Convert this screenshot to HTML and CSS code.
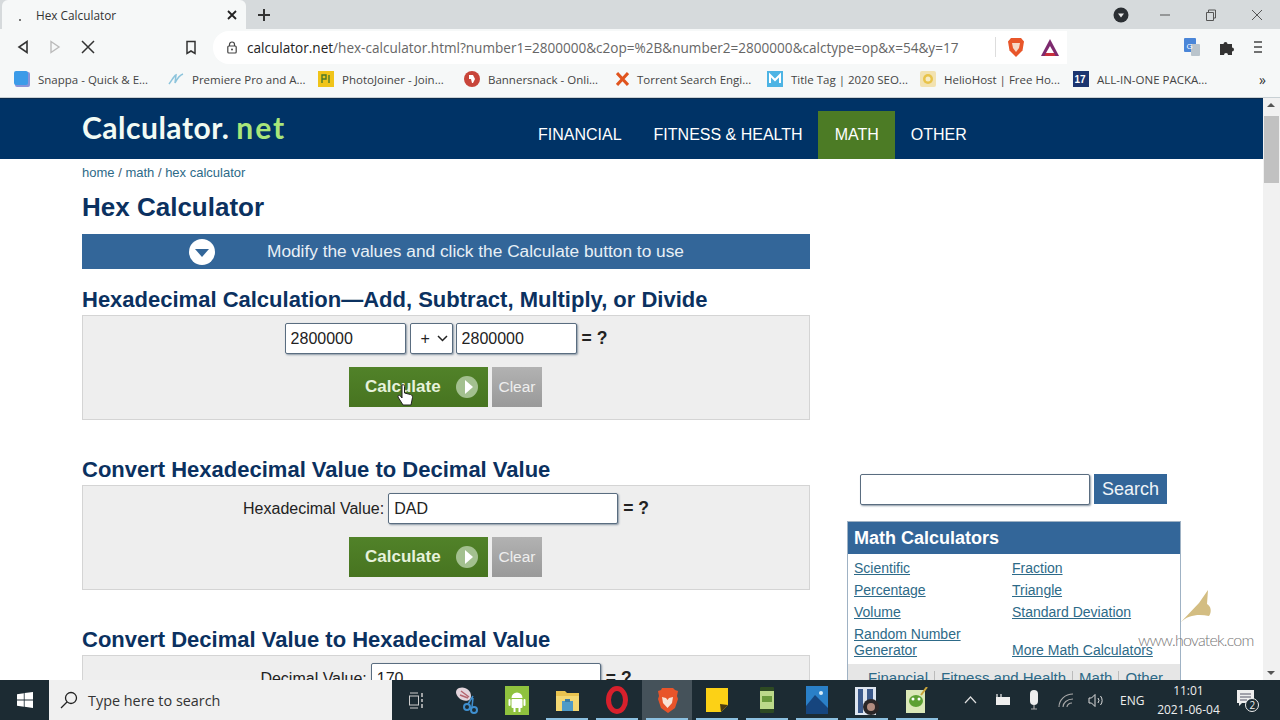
FILE: index.html
```html
<!DOCTYPE html>
<html lang="en">
<head>
    <meta charset="UTF-8">
    <title>Hex Calculator</title>
    <link rel="stylesheet" href="styles.css">
</head>
<body>

    <!-- Tab strip -->
    <div class="tabstrip">
        <div class="tab">
            <span class="tab-dot"></span>
            <span class="tab-title">Hex Calculator</span>
            <svg class="tab-x" width="12" height="12" viewBox="0 0 12 12"><path d="M2 2l8 8M10 2l-8 8" stroke="#222" stroke-width="1.8"/></svg>
        </div>
        <svg class="new-tab" width="14" height="14" viewBox="0 0 14 14"><path d="M7 1v12M1 7h12" stroke="#333" stroke-width="2"/></svg>
        <div class="window-controls">
            <svg class="profile" width="16" height="16" viewBox="0 0 16 16"><circle cx="8" cy="8" r="7.5" fill="#2b2f33"/><path d="M5 6.5h6L8 10.5z" fill="#e8e8e8"/></svg>
            <svg class="win-btn" width="12" height="12" viewBox="0 0 12 12"><path d="M1 6h10" stroke="#555"/></svg>
            <svg class="win-btn" width="12" height="12" viewBox="0 0 12 12"><path d="M1.500 3.500h7v8h-7zM3.500 3.500v-2.500h7v8h-2" fill="none" stroke="#555"/></svg>
            <svg class="win-btn" width="12" height="12" viewBox="0 0 12 12"><path d="M1 1l10 10M11 1L1 11" stroke="#555"/></svg>
        </div>
    </div>

    <!-- Toolbar -->
    <div class="toolbar">
        <svg class="nav-btn" width="12" height="14" viewBox="0 0 12 14"><path d="M10 1.500v11L2 7z" fill="none" stroke="#333" stroke-width="1.600"/></svg>
        <svg class="nav-btn" width="12" height="14" viewBox="0 0 12 14"><path d="M2 1.500v11L10 7z" fill="none" stroke="#bbb" stroke-width="1.400"/></svg>
        <svg class="nav-btn" width="14" height="14" viewBox="0 0 14 14"><path d="M1 1l12 12M13 1L1 13" stroke="#333" stroke-width="1.500"/></svg>
        <svg class="bookmark-btn" width="12" height="15" viewBox="0 0 12 15"><path d="M2 1.500h8v12L6 11l-4 2.500z" fill="none" stroke="#333" stroke-width="1.500"/></svg>
        <div class="omnibox">
            <svg class="lock" width="10" height="13" viewBox="0 0 10 13"><path d="M2.500 5V3.500a2.500 2.500 0 015 0V5" fill="none" stroke="#444" stroke-width="1.200"/><rect x=".8" y="5" width="8.400" height="7" rx="1" fill="none" stroke="#444" stroke-width="1.200"/><circle cx="5" cy="8.500" r="1" fill="#444"/></svg>
            <span class="url"><span class="url-host">calculator.net</span>/hex-calculator.html?number1=2800000&amp;c2op=%2B&amp;number2=2800000&amp;calctype=op&amp;x=54&amp;y=17</span>
            <span class="omni-sep"></span>
            <svg class="omni-icon" width="18" height="21" viewBox="0 0 18 21"><path d="M4 1h10l3 3.500-1.500 9L9 20l-6.500-6.500L1 4.500z" fill="#e8562a"/><path d="M5 6h8l-1 5-3 4-3-4z" fill="#f6d9c8"/></svg>
            <svg class="omni-icon" width="18" height="17" viewBox="0 0 18 17"><path d="M9 0L18 17H0z" fill="#7d2a6e"/><path d="M9 7l4 7H5z" fill="#fff"/><path d="M5 14h8l1.500 3h-11z" fill="#c8303c"/></svg>
        </div>
        <div class="ext-icons">
            <svg width="16" height="18" viewBox="0 0 16 18"><rect width="12" height="14" rx="1" fill="#4a86d8"/><rect x="7" y="6" width="9" height="12" rx="1" fill="#b9c4cc"/><text x="2.500" y="11" font-size="8" fill="#fff" font-family="Liberation Sans">G</text></svg>
            <svg width="15" height="15" viewBox="0 0 15 15"><path d="M1 4h3.500a2 2 0 114 0H13v3.500a2 2 0 110 4V15H9a2 2 0 10-4 0H1z" fill="#333"/></svg>
            <svg width="10" height="14" viewBox="0 0 10 14"><path d="M1 2h8M1 7h8M1 12h8" stroke="#444" stroke-width="1.500"/></svg>
        </div>
    </div>

    <!-- Bookmarks bar -->
    <div class="bookmarks">
        <div class="bm bm-1"><svg width="16" height="16" viewBox="0 0 16 16"><rect x="1" y="1" width="15" height="15" rx="2" fill="#8a94d8"/><rect width="14" height="14" rx="2" fill="#3b9be8"/></svg>Snappa - Quick &amp; E...</div>
        <div class="bm bm-2"><svg width="16" height="16" viewBox="0 0 16 16"><path d="M1 13C4 9 6 5 8 4L7 12C9 8 12 4 15 3" fill="none" stroke="#8cc4dc" stroke-width="1.500"/></svg>Premiere Pro and A...</div>
        <div class="bm bm-3"><svg width="16" height="16" viewBox="0 0 16 16"><rect width="16" height="16" fill="#f0c419"/><path d="M4 4h4v4H4zM4 8v4M11 4v8" fill="none" stroke="#4a7a2a" stroke-width="1.400"/></svg>PhotoJoiner - Join...</div>
        <div class="bm bm-4"><svg width="16" height="16" viewBox="0 0 16 16"><circle cx="8" cy="8" r="8" fill="#c8453a"/><path d="M5 4h4l2 4-2 4H8L7 8H5z" fill="#fff"/></svg>Bannersnack - Onli...</div>
        <div class="bm bm-5"><svg width="13" height="14" viewBox="0 0 13 14"><path d="M1 1l11 12M12 1L1 13" stroke="#e0541e" stroke-width="3"/></svg>Torrent Search Engi...</div>
        <div class="bm bm-6"><svg width="16" height="16" viewBox="0 0 16 16"><rect width="16" height="16" fill="#4db4e4"/><path d="M3 12V4l5 5 5-5v8" fill="none" stroke="#fff" stroke-width="2"/></svg>Title Tag | 2020 SEO...</div>
        <div class="bm bm-7"><svg width="16" height="16" viewBox="0 0 16 16"><rect width="16" height="16" rx="2" fill="#f2e2b0"/><circle cx="8" cy="8" r="5" fill="#e8c34a"/><circle cx="8" cy="8" r="2.500" fill="#f6ecc8"/></svg>HelioHost | Free Ho...</div>
        <div class="bm bm-8"><svg width="16" height="16" viewBox="0 0 16 16"><rect width="16" height="16" fill="#1c3570"/><text x="1.500" y="12" font-size="10" font-weight="700" fill="#fff" font-family="Liberation Sans">17</text></svg>ALL-IN-ONE PACKA...</div>
        <span class="bm-more">»</span>
    </div>

    <!-- Page in the browser viewport -->
    <div class="viewport">
        <div class="page">
            <div class="site-header">
                <div class="logo">Calculator.<span class="logo-net">net</span></div>
                <nav class="site-nav">
                    <a>FINANCIAL</a>
                    <a>FITNESS &amp; HEALTH</a>
                    <a class="active">MATH</a>
                    <a>OTHER</a>
                </nav>
            </div>

            <div class="columns">
                <div class="main">
                    <div class="breadcrumb"><a>home</a> / <a>math</a> / <a>hex calculator</a></div>
                    <h1>Hex Calculator</h1>
                    <div class="modify-bar">
                        <svg width="26" height="26" viewBox="0 0 26 26"><circle cx="13" cy="13" r="13" fill="#fff"/><path d="M6 10h14l-7 8z" fill="#336699"/></svg>
                        <span>Modify the values and click the Calculate button to use</span>
                    </div>

                    <h2>Hexadecimal Calculation—Add, Subtract, Multiply, or Divide</h2>
                    <div class="panel">
                        <div class="form-row">
                            <input class="field field-num" type="text" value="2800000">
                            <div class="field op-select">+<svg width="11" height="7" viewBox="0 0 11 7"><path d="M1 1l4.500 4.500L10 1" fill="none" stroke="#222" stroke-width="1.500"/></svg></div>
                            <input class="field field-num field-second" type="text" value="2800000">
                            <b class="equals">= ?</b>
                        </div>
                        <div class="btn-row">
                            <div class="btn-calc">Calculate<svg width="24" height="24" viewBox="0 0 24 24"><circle cx="12" cy="12" r="11" fill="#a3c08f"/><path d="M10 5l8 7-8 7z" fill="#fff"/></svg></div>
                            <div class="btn-clear">Clear</div>
                        </div>
                    </div>

                    <h2>Convert Hexadecimal Value to Decimal Value</h2>
                    <div class="panel">
                        <div class="form-row">
                            <span class="label">Hexadecimal Value:</span>
                            <input class="field field-wide" type="text" value="DAD">
                            <b class="equals">= ?</b>
                        </div>
                        <div class="btn-row">
                            <div class="btn-calc">Calculate<svg width="24" height="24" viewBox="0 0 24 24"><circle cx="12" cy="12" r="11" fill="#a3c08f"/><path d="M10 5l8 7-8 7z" fill="#fff"/></svg></div>
                            <div class="btn-clear">Clear</div>
                        </div>
                    </div>

                    <h2>Convert Decimal Value to Hexadecimal Value</h2>
                    <div class="panel">
                        <div class="form-row">
                            <span class="label">Decimal Value:</span>
                            <input class="field field-wide" type="text" value="170">
                            <b class="equals">= ?</b>
                        </div>
                    </div>
                </div>

                <div class="sidebar">
                    <div class="search-row">
                        <input class="search-input" type="text">
                        <div class="search-btn">Search</div>
                    </div>
                    <div class="side-box">
                        <div class="side-title">Math Calculators</div>
                        <div class="side-links">
                            <a>Scientific</a><a>Fraction</a>
                            <a>Percentage</a><a>Triangle</a>
                            <a>Volume</a><a>Standard Deviation</a>
                            <a class="random-link">Random Number Generator</a><a>More Math Calculators</a>
                        </div>
                        <div class="side-footer"><a>Financial</a><i></i><a>Fitness and Health</a><i></i><a>Math</a><i></i><a>Other</a></div>
                    </div>
                </div>
            </div>
        </div>

        <div class="scrollbar">
            <span class="arrow-up"></span>
            <span class="thumb"></span>
            <span class="arrow-down"></span>
        </div>

        <!-- Mouse pointer and video watermark on top of the page -->
        <svg class="cursor" width="17" height="24" viewBox="0 0 17 24"><path d="M5 2c1.200-1 2.500 0 2.500 1.500V10l6 1.500c1.500.5 2 1.500 2 3L14 22H6L1 14c-.5-1.500 1-2.500 2.500-1L5 15z" fill="#fff" stroke="#222"/></svg>
        <div class="watermark">
            <svg width="32" height="33" viewBox="0 0 32 33"><path d="M28 0L19 13 0 33c8-8 18-9 29-7 3-4 2-10-2-12z" fill="#d3bd82"/></svg>
            <span>www.hovatek.com</span>
        </div>
    </div>

    <!-- Windows taskbar -->
    <div class="taskbar">
        <div class="start"><svg width="16" height="16" viewBox="0 0 16 16"><path d="M0 2.200l6.800-1v6.300H0zM7.600 1L16 0v7.500H7.600zM0 8.400h6.800v6.400l-6.800-1zM7.600 8.400H16V16l-8.400-1.200z" fill="#fff"/></svg></div>
        <div class="task-search">
            <svg width="18" height="18" viewBox="0 0 18 18"><circle cx="11" cy="7" r="5.500" fill="none" stroke="#222" stroke-width="1.300"/><path d="M7 11l-6 6" stroke="#222" stroke-width="1.300"/></svg>
            <span>Type here to search</span>
        </div>
        <div class="task-view"><svg width="17" height="17" viewBox="0 0 17 17"><path d="M3 1h8M3 16h8" stroke="#ccc"/><rect x="2.500" y="4" width="9" height="9" fill="none" stroke="#ccc"/><path d="M15 1v4M15 7v3M15 12v4" stroke="#ccc" stroke-width="1.500"/></svg></div>
        <div class="task-apps">
            <div class="app"><svg width="24" height="28" viewBox="0 0 24 28"><path d="M4 2c6-2 12 2 12 8S8 16 4 12 0 4 4 2z" fill="#e3d4dc"/><path d="M6 5l8 6M5 9l8 3" stroke="#b5646e" stroke-width="1.500"/><circle cx="12" cy="21" r="3" fill="none" stroke="#3f8fd0" stroke-width="2"/><circle cx="19" cy="24" r="3" fill="none" stroke="#3f8fd0" stroke-width="2"/><path d="M13 18l5-8M17 21l1-9" stroke="#3f8fd0" stroke-width="1.500"/></svg></div>
            <div class="app"><svg width="24" height="29" viewBox="0 0 24 29"><rect width="24" height="29" fill="#8fc23e"/><path d="M6.500 12a5.500 5.500 0 0111 0z" fill="#fff"/><rect x="6.500" y="13" width="11" height="9" rx="1" fill="#fff"/><rect x="3.500" y="13" width="2" height="7" rx="1" fill="#fff"/><rect x="18.500" y="13" width="2" height="7" rx="1" fill="#fff"/><rect x="8.500" y="22" width="2" height="4" fill="#fff"/><rect x="13.500" y="22" width="2" height="4" fill="#fff"/></svg></div>
            <div class="app running"><svg width="23" height="22" viewBox="0 0 23 22"><path d="M0 2h9l2 2h12v18H0z" fill="#e9c350"/><rect y="7" width="23" height="15" fill="#f4d873"/><rect x="6" y="12" width="11" height="10" fill="#4f9bc8"/><rect x="9" y="10" width="5" height="3" fill="#3a7da8"/></svg></div>
            <div class="app running"><svg width="22" height="28" viewBox="0 0 22 28"><ellipse cx="11" cy="14" rx="8.500" ry="11.500" fill="none" stroke="#d8202c" stroke-width="5"/></svg></div>
            <div class="app running active"><svg width="23" height="27" viewBox="0 0 23 27"><path d="M6 1h11l2 2 3 1-1 5 1 3-3 9-7 5-7-5-3-9 1-3-1-5 3-1z" fill="#e8542a"/><path d="M6 10l4 1 1.500 2 1.500-2 4-1-1 6-4.500 5-4.500-5z" fill="#f8e3d6"/></svg></div>
            <div class="app running"><svg width="22" height="24" viewBox="0 0 22 24"><path d="M0 0h22v17l-7 7H0z" fill="#fcd116"/><path d="M15 24l-1-8 8 1z" fill="#4a3a12"/></svg></div>
            <div class="app running"><svg width="14" height="26" viewBox="0 0 14 26"><rect width="14" height="26" rx="1" fill="#2e4a22"/><rect y="4" width="14" height="18" fill="#bcd98a"/><rect x="2" y="9" width="10" height="6" fill="#6b9b3c"/></svg></div>
            <div class="app running"><svg width="22" height="28" viewBox="0 0 22 28"><rect width="22" height="28" fill="#2a80c8"/><path d="M0 28V20l9-11 13 13v6z" fill="#16457e"/><circle cx="15" cy="7" r="2" fill="#d8ecf8"/></svg></div>
            <div class="app running"><svg width="24" height="30" viewBox="0 0 24 30"><rect y="2" width="21" height="28" fill="#dfe6f0"/><path d="M3 4h5v24H3zM12 4h6v12h-6z" fill="#3c5a8c"/><circle cx="16" cy="22" r="8" fill="#2a2628"/><circle cx="16" cy="22" r="4" fill="#b28c80"/></svg></div>
            <div class="app running"><svg width="22" height="26" viewBox="0 0 22 26"><rect y="3" width="19" height="23" fill="#dbe8b8"/><ellipse cx="10" cy="14" rx="7" ry="6" fill="#5ca032"/><circle cx="7" cy="12" r="1.500" fill="#fff"/><circle cx="13" cy="12" r="1.500" fill="#fff"/><path d="M15 8l6-8" stroke="#c8a43c" stroke-width="2"/></svg></div>
        </div>
        <div class="tray">
            <svg class="tray-chevron" width="13" height="8" viewBox="0 0 13 8"><path d="M1 7l5.500-6L12 7" fill="none" stroke="#ddd" stroke-width="1.200"/></svg>
            <svg class="tray-battery" width="17" height="12" viewBox="0 0 17 12"><rect x="2" y="3" width="14" height="8" fill="#eee"/><path d="M3 0v3M7 0v3" stroke="#eee" stroke-width="1.200"/></svg>
            <svg class="tray-mic" width="10" height="20" viewBox="0 0 10 20"><rect x="1" width="8" height="15" rx="4" fill="#eee"/><path d="M5 15v4M2 19h6" stroke="#aaa" stroke-width="1.200"/></svg>
            <svg class="tray-wifi" width="16" height="15" viewBox="0 0 16 15"><path d="M1 14C1 7 7 1 15 1M5 14c0-4 4-8 10-8M9 14c0-2 2-4 5-4" fill="none" stroke="#aaa" stroke-width="1.100"/></svg>
            <svg class="tray-sound" width="16" height="15" viewBox="0 0 16 15"><path d="M1 5h2.500L7 1.500v12L3.500 10H1z" fill="none" stroke="#ddd"/><path d="M10 5a4 4 0 010 5M12.500 3a7 7 0 010 9" fill="none" stroke="#ddd"/></svg>
            <span class="tray-lang">ENG</span>
            <div class="clock"><span>11:01</span><span>2021-06-04</span></div>
            <div class="notify">
                <svg width="17" height="17" viewBox="0 0 17 17"><path d="M0 0h17v13H5l-3 3v-3H0z" fill="#eee"/><path d="M3 4h11M3 7h11M3 10h7" stroke="#556"/></svg>
                <span class="notify-count">2</span>
            </div>
        </div>
    </div>

</body>
</html>
```

FILE: styles.css
```css
* {
    box-sizing: border-box;
}

html, body {
    margin: 0;
    height: 720px;
    overflow: hidden;
}

body {
    display: flex;
    flex-direction: column;
    width: 1280px;
    font-family: "Liberation Sans", Arial, sans-serif;
    background-color: #fff;
}

/* Browser chrome */
.tabstrip {
    height: 29px;
    display: flex;
    align-items: center;
    background-color: #d6dadc;
    flex: none;
}

.tab {
    width: 244px;
    height: 29px;
    margin-left: 2px;
    padding: 0 8px 0 17px;
    display: flex;
    align-items: center;
    background-color: #f6f8f8;
    border-radius: 6px 6px 0 0;
}

.tab-dot {
    width: 2px;
    height: 2px;
    margin-top: 11px;
    background-color: #777;
}

.tab-title {
    flex: 1;
    margin-left: 15px;
    font-family: "Open Sans", sans-serif;
    font-size: 11.800px;
    color: #333;
}

.new-tab {
    margin-left: 11px;
}

.window-controls {
    margin-left: auto;
    display: flex;
    align-items: center;
}

.profile {
    margin-right: 30px;
}

.win-btn {
    margin-right: 34px;
}

.win-btn:last-child {
    margin-right: 17px;
}

.toolbar {
    height: 36px;
    display: flex;
    align-items: center;
    background-color: #f6f8f8;
    flex: none;
}

.nav-btn {
    margin-left: 20px;
}

.nav-btn:first-child {
    margin-left: 17px;
}

.bookmark-btn {
    margin-left: 90px;
}

.omnibox {
    width: 854px;
    height: 33px;
    margin-left: 16px;
    padding-left: 14px;
    display: flex;
    align-items: center;
    background-color: #fff;
    border-radius: 16px 0 0 16px;
}

.url {
    width: 748px;
    margin-left: 10px;
    font-family: "Open Sans", sans-serif;
    font-size: 13.570px;
    color: #666;
    white-space: nowrap;
}

.url-host {
    color: #222;
}

.omni-sep {
    width: 1px;
    height: 20px;
    background-color: #ddd;
}

.omni-icon {
    margin-left: 11px;
}

.omni-icon:last-child {
    margin-left: 16px;
}

.ext-icons {
    margin-left: auto;
    margin-right: 17px;
    display: flex;
    align-items: center;
    gap: 19px;
}

.bookmarks {
    height: 33px;
    padding-bottom: 4px;
    display: flex;
    align-items: center;
    background-color: #f6f8f8;
    border-bottom: 1px solid #c8d0d4;
    font-family: "Open Sans", sans-serif;
    font-size: 11.500px;
    color: #444;
    flex: none;
}

.bm {
    display: flex;
    align-items: center;
    gap: 8px;
    white-space: nowrap;
}

.bm-1 { margin-left: 14px; width: 154px; }
.bm-2 { width: 150px; }
.bm-3 { width: 146px; }
.bm-4 { width: 152px; }
.bm-5 { width: 151px; }
.bm-6 { width: 153px; }
.bm-7 { width: 153px; }
.bm-8 { width: 186px; }

.bm-more {
    font-size: 14px;
    color: #333;
}

/* Page */
.viewport {
    position: relative;
    height: 582px;
    display: flex;
    overflow: hidden;
    flex: none;
}

.page {
    width: 1263px;
    flex: none;
}

.site-header {
    height: 61px;
    padding-left: 82px;
    display: flex;
    align-items: flex-end;
    background-color: #003366;
    border-top: 1px solid #0a2a4c;
}

.logo {
    width: 440px;
    align-self: flex-start;
    margin-top: 10px;
    font-family: "Lato", sans-serif;
    font-size: 30px;
    font-weight: 700;
    letter-spacing: .5px;
    color: #f2fbf4;
}

.logo-net {
    margin-left: 7px;
    letter-spacing: 2px;
    color: #a9e67a;
}

.site-nav {
    display: flex;
    font-size: 16px;
    color: #fff;
}

.site-nav a {
    height: 48px;
    padding: 0 16px;
    line-height: 48px;
}

.site-nav a.active {
    margin-left: -1px;
    padding-left: 17px;
    background-color: #4c7b25;
}

.columns {
    display: flex;
}

.main {
    width: 728px;
    margin-left: 82px;
}

.breadcrumb {
    height: 26px;
    padding-top: 6px;
    font-size: 13px;
    color: #46586a;
}

.breadcrumb a {
    color: #2d6a88;
}

h1 {
    height: 30px;
    margin: 7px 0 12px;
    line-height: 30px;
    font-size: 26px;
    color: #0b3160;
}

.modify-bar {
    height: 35px;
    padding-left: 107px;
    display: flex;
    align-items: center;
    gap: 52px;
    background-color: #336699;
    font-size: 17.300px;
    color: #e8f0f6;
}

h2 {
    height: 25px;
    margin: 18px 0 3px;
    line-height: 25px;
    font-size: 22px;
    color: #0b3160;
}

.panel + h2 {
    margin-top: 37px;
}

.panel {
    height: 105px;
    padding-top: 7px;
    background-color: #eee;
    border: 1px solid #d4d4d4;
}

.form-row {
    height: 31px;
    display: flex;
    justify-content: center;
    align-items: center;
    gap: 4px;
    font-size: 16px;
    color: #222;
}

.field {
    height: 31px;
    padding: 0 5px;
    background-color: #fff;
    border: 1px solid #5a6d80;
    border-radius: 2px;
    box-shadow: 1px 1px 2px #8a97a5;
    font-family: "Liberation Sans", Arial, sans-serif;
    font-size: 16px;
    color: #222;
}

.field-num {
    width: 121px;
}

.field-second {
    margin-left: -1px;
}

.op-select {
    width: 43px;
    padding: 0 4px 0 10px;
    display: flex;
    align-items: center;
    justify-content: space-between;
}

.field-wide {
    width: 230px;
}

.equals {
    margin-left: 1px;
    font-size: 17.500px;
}

.label {
    font-size: 16px;
}

.btn-row {
    margin-top: 13px;
    padding-right: 1px;
    display: flex;
    justify-content: center;
    gap: 4px;
}

.btn-calc {
    width: 139px;
    height: 40px;
    padding: 0 9px 0 16px;
    display: flex;
    align-items: center;
    justify-content: space-between;
    background: linear-gradient(#518229, #477420);
    font-size: 17px;
    font-weight: 700;
    color: #e6f2dc;
}

.btn-clear {
    width: 50px;
    height: 40px;
    line-height: 40px;
    text-align: center;
    background: linear-gradient(#b2b2b2, #999);
    font-size: 15.500px;
    color: #eee;
}

/* Right column */
.sidebar {
    width: 334px;
    margin-left: 37px;
    padding-top: 315px;
}

.search-row {
    margin-left: 13px;
    display: flex;
    gap: 4px;
}

.search-input {
    width: 230px;
    height: 31px;
    background-color: #fff;
    border: 1px solid #5a6d80;
    border-radius: 2px;
    box-shadow: 1px 1px 2px #8a97a5;
}

.search-btn {
    width: 73px;
    height: 30px;
    line-height: 30px;
    text-align: center;
    background-color: #336699;
    font-size: 18px;
    color: #eef4f8;
}

.side-box {
    margin-top: 16px;
    border: 1px solid #9fb2c4;
    border-bottom: none;
}

.side-title {
    height: 32px;
    padding-left: 6px;
    line-height: 32px;
    background-color: #336699;
    font-size: 18px;
    font-weight: 700;
    color: #fff;
}

.side-links {
    padding: 6px;
    display: grid;
    grid-template-columns: 158px 1fr;
    row-gap: 6px;
    align-items: end;
    font-size: 14px;
    line-height: 16px;
    color: #2d6a88;
}

.side-links a {
    text-decoration: underline;
}

.side-links .random-link {
    padding-right: 40px;
}

.side-footer {
    height: 30px;
    padding: 6px 0 0 20px;
    display: flex;
    align-items: flex-start;
    background-color: #e6e6e6;
    font-size: 15px;
    line-height: 16px;
    color: #2d6a88;
}

.side-footer i {
    width: 1px;
    height: 14px;
    margin: 1px 6px;
    background-color: #bbb;
}

.scrollbar {
    position: relative;
    width: 17px;
    background-color: #f1f1f1;
}

.arrow-up, .arrow-down {
    position: absolute;
    left: 4px;
    border-left: 4px solid transparent;
    border-right: 4px solid transparent;
}

.arrow-up {
    top: 5px;
    border-bottom: 4px solid #555;
}

.arrow-down {
    bottom: 5px;
    border-top: 4px solid #555;
}

.thumb {
    position: absolute;
    top: 18px;
    left: 1px;
    width: 15px;
    height: 67px;
    background-color: #c1c1c1;
}

.cursor {
    position: absolute;
    left: 397px;
    top: 285px;
}

.watermark {
    position: absolute;
    left: 1138px;
    top: 492px;
    display: flex;
    flex-direction: column;
    align-items: flex-start;
    gap: 7px;
    font-family: "Lato", sans-serif;
    font-size: 16px;
    font-weight: 300;
    letter-spacing: -.8px;
    color: #777;
}

.watermark svg {
    margin-left: 42px;
}

/* Taskbar */
.taskbar {
    height: 40px;
    display: flex;
    align-items: center;
    background-color: #1c2b33;
    color: #eee;
    flex: none;
}

.start {
    width: 49px;
    display: flex;
    justify-content: center;
}

.task-search {
    width: 343px;
    height: 40px;
    padding-left: 11px;
    display: flex;
    align-items: center;
    gap: 10px;
    background-color: #f0f0f0;
    font-family: "Open Sans", sans-serif;
    font-size: 14.400px;
    color: #333;
}

.task-view {
    width: 50px;
    padding-right: 4px;
    display: flex;
    justify-content: center;
}

.task-apps {
    height: 40px;
    display: flex;
}

.app {
    position: relative;
    width: 50px;
    height: 40px;
    display: flex;
    align-items: center;
    justify-content: center;
}

.app.active {
    background-color: #45525a;
}

.app.running::after {
    content: "";
    position: absolute;
    left: 4px;
    right: 4px;
    bottom: 0;
    height: 2px;
    background-color: #8cc0e0;
}

.tray {
    width: 322px;
    height: 40px;
    margin-left: auto;
    display: flex;
    align-items: center;
    font-family: "Open Sans", sans-serif;
    font-size: 12px;
}

.tray-chevron { margin-left: 6px; }
.tray-battery { margin-left: 17px; }
.tray-mic { margin-left: 18px; }
.tray-wifi { margin-left: 19px; }
.tray-sound { margin-left: 14px; }
.tray-lang { margin-left: 16px; }

.clock {
    width: 86px;
    margin-left: 1px;
    display: flex;
    flex-direction: column;
    align-items: center;
    gap: 1px;
    line-height: 18px;
}

.notify {
    position: relative;
    margin-left: 6px;
}

.notify-count {
    position: absolute;
    left: 8px;
    top: 8px;
    width: 14px;
    height: 14px;
    line-height: 12px;
    text-align: center;
    background-color: #1c2b33;
    border: 1px solid #eee;
    border-radius: 50%;
    font-size: 10px;
}
```
